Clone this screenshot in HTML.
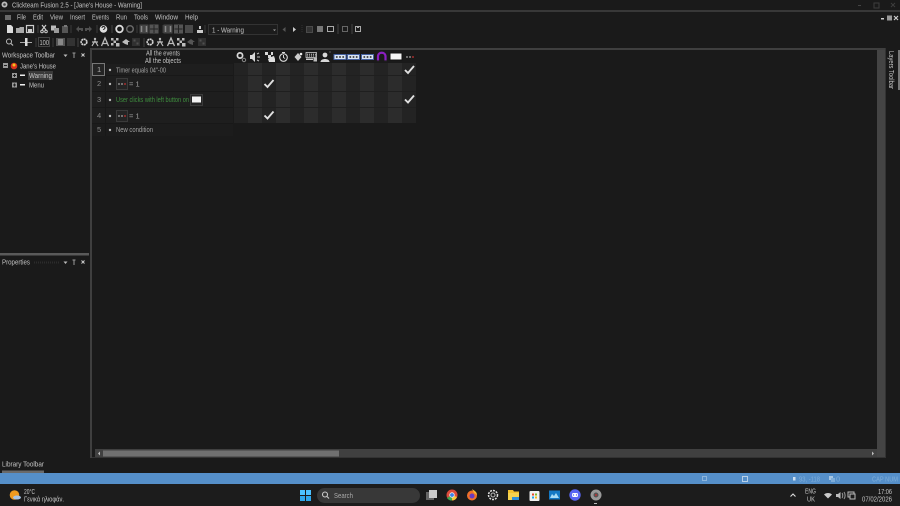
<!DOCTYPE html>
<html><head><meta charset="utf-8"><style>
html,body{margin:0;padding:0;background:#1a1a1a;width:900px;height:506px;overflow:hidden}
svg{display:block}
text{font-family:"Liberation Sans","Noto Sans CJK SC",sans-serif;font-size:7.5px;fill:#c4c4c4}
</style></head><body>
<svg width="900" height="506" viewBox="0 0 900 506" xmlns="http://www.w3.org/2000/svg">
<defs>
<g id="chk"><path d="M-4.500 0.500L-1.500 3.500L4.500 -3.500" fill="none" stroke="#e0e0e0" stroke-width="1.900"/></g>
<g id="gear"><circle r="2.800" fill="none" stroke="#d0d0d0" stroke-width="1.700" stroke-dasharray="2 .5"/></g>
<g id="run"><circle cx="0" cy="-3" r="1.200" fill="#bbb"/><path d="M-3 4L0 -1L3 4M-3 0H3" stroke="#bbb" stroke-width="1.200" fill="none"/></g>
<g id="atxt"><path d="M-3.500 4L0 -4L3.500 4M-2 1.500H2" stroke="#bbb" stroke-width="1.300" fill="none"/></g>
<g id="chkr"><path d="M-4 -4h2.500v2.500h-2.500zM1 -4h2.500v2.500h-2.500zM-1.500 -1.500h2.500v2.500h-2.500zM1 1h3.500v3.500h-3.500zM-4 1h2.500v2.500h-2.500z" fill="#bbb"/></g>
<g id="obj"><rect x="-4" y="-4" width="8" height="8" fill="#303030"/><path d="M-2.500 -2.500h2v2h-2zM.5 .5h2v2h-2z" fill="#505050"/></g>
<g id="cnt"><rect x="-6" y="-2.500" width="12" height="5" fill="#d8e4f4" stroke="#44609f" stroke-width="1"/><circle cx="-3.200" cy="0" r="1" fill="#444"/><circle cx="0" cy="0" r="1" fill="#444"/><circle cx="3.200" cy="0" r="1" fill="#444"/></g>
<g id="dots"><circle cx="-3" r=".9" fill="#aaa"/><circle cx="0" r=".9" fill="#aaa"/><circle cx="3" r=".9" fill="#c33"/></g>
<g id="tile"><rect x="-4.500" y="-4.500" width="9" height="9" fill="#444"/><path d="M-2.500 -3v6M2.500 -3v6" stroke="#888" stroke-width="1.500"/></g>
<g id="tile2"><rect x="-4.500" y="-4.500" width="9" height="9" fill="#555"/><path d="M0 -4v8M-4 0h8" stroke="#222" stroke-width="1"/></g>
</defs>

<rect width="900" height="506" fill="#1a1a1a"/>

<!-- title bar -->
<circle cx="4.500" cy="4.500" r="3" fill="#bbb"/><circle cx="4.500" cy="4.500" r="1.300" fill="#444"/>
<text x="12" y="7.500" textLength="130" lengthAdjust="spacingAndGlyphs">Clickteam Fusion 2.5 - [Jane's House - Warning]</text>
<rect x="0" y="10" width="900" height="2" fill="#383838"/>
<path d="M858 5.500h3" stroke="#444"/><rect x="874" y="3" width="5" height="5" fill="none" stroke="#3d3d3d"/><path d="M891 3l4 4M895 3l-4 4" stroke="#3d3d3d"/>

<!-- menu -->
<path d="M6 15v5M8 15v5M10 15v5" stroke="#bbb"/>
<text x="17" y="19.500" textLength="9" lengthAdjust="spacingAndGlyphs">File</text>
<text x="33" y="19.500" textLength="10" lengthAdjust="spacingAndGlyphs">Edit</text>
<text x="50" y="19.500" textLength="13" lengthAdjust="spacingAndGlyphs">View</text>
<text x="70" y="19.500" textLength="15" lengthAdjust="spacingAndGlyphs">Insert</text>
<text x="92" y="19.500" textLength="17" lengthAdjust="spacingAndGlyphs">Events</text>
<text x="116" y="19.500" textLength="11" lengthAdjust="spacingAndGlyphs">Run</text>
<text x="134" y="19.500" textLength="14" lengthAdjust="spacingAndGlyphs">Tools</text>
<text x="155" y="19.500" textLength="23" lengthAdjust="spacingAndGlyphs">Window</text>
<text x="185" y="19.500" textLength="13" lengthAdjust="spacingAndGlyphs">Help</text>
<g fill="#ccc"><rect x="881" y="18" width="3" height="1.500"/><rect x="887" y="15.500" width="5" height="5" fill="#999"/></g>
<path d="M894 16l4 4M898 16l-4 4" stroke="#ccc" stroke-width="1.200"/>

<!-- toolbar row 1 -->
<path d="M7 25h4l2 2v6h-6z" fill="#ddd"/>
<path d="M16 28h3l1 -1h4v6h-8z" fill="#aaa"/>
<rect x="26.500" y="25.500" width="7" height="7" fill="#222" stroke="#ccc" stroke-width="1.200"/><rect x="28" y="29" width="4" height="3.500" fill="#ccc"/>
<path d="M38 25v8M112 25v8" stroke="#444"/>
<path d="M42 25l4 5M46 25l-4 5" stroke="#ccc" stroke-width="1.200"/><circle cx="42" cy="31.500" r="1.300" fill="none" stroke="#ccc"/><circle cx="46" cy="31.500" r="1.300" fill="none" stroke="#ccc"/>
<rect x="51" y="25.500" width="5" height="5" fill="#bbb"/><rect x="54" y="28" width="5" height="5" fill="#999"/>
<rect x="62" y="26" width="6" height="7" fill="#555"/><rect x="64" y="25" width="3" height="2" fill="#777"/>
<path d="M71 25v8M97 25v8" stroke="#3a3a3a"/>
<path d="M76 29l3 -3v2h4v3h-2v-1h-2v2z" fill="#505050"/><path d="M92 29l-3 -3v2h-4v3h2v-1h2v2z" fill="#505050"/>
<circle cx="103.500" cy="29" r="3.800" fill="#ddd"/><path d="M102 28c0 -2 3 -2 3 0c0 1 -1.500 1 -1.500 2" stroke="#222" fill="none"/>
<circle cx="119.500" cy="29" r="3.300" fill="none" stroke="#ddd" stroke-width="1.800"/>
<circle cx="130" cy="29" r="3.300" fill="none" stroke="#666" stroke-width="1.500"/>
<path d="M137 25v8M163 25v8M205 25v8" stroke="#3a3a3a"/>
<use href="#tile" x="144" y="29"/><use href="#tile2" x="154" y="29"/>
<use href="#tile" x="168" y="29"/><use href="#tile2" x="178.500" y="29"/><rect x="185" y="25" width="8" height="8" fill="#4a4a4a"/>
<path d="M197 30h6v3h-6z" fill="#ccc"/><path d="M199 26h2v3h-2z" fill="#ccc"/>
<rect x="208.500" y="24.500" width="69" height="10" fill="#1c1c1c" stroke="#333"/>
<text x="212" y="32.500" textLength="32" lengthAdjust="spacingAndGlyphs">1 - Warning</text>
<path d="M273 29.500h3l-1.500 1.500z" fill="#aaa"/>
<path d="M285.500 27v5l-3 -2.500z" fill="#555"/><path d="M293 27v5l3 -2.500z" fill="#ccc"/>
<path d="M302 25v8" stroke="#333" stroke-dasharray="1 1"/>
<rect x="306.500" y="26.500" width="6" height="6" fill="#333" stroke="#4a4a4a"/>
<rect x="317" y="26" width="6" height="6" fill="#777"/>
<rect x="327.500" y="26.500" width="6" height="5" fill="none" stroke="#aaa"/>
<path d="M338 24v10M352 24v10" stroke="#444"/>
<rect x="342.500" y="26.500" width="5" height="5" fill="none" stroke="#666"/>
<rect x="355.500" y="26.500" width="5" height="5" fill="none" stroke="#aaa"/><rect x="357" y="26" width="2" height="2" fill="#aaa"/>

<!-- toolbar row 2 -->
<circle cx="9" cy="41.500" r="2.500" fill="none" stroke="#bbb"/><path d="M11 43.500l2 2" stroke="#bbb" stroke-width="1.200"/>
<rect x="20" y="42" width="12" height="1" fill="#aaa"/><rect x="25" y="38" width="2.500" height="8" fill="#ddd"/>
<path d="M36 38v9" stroke="#3a3a3a"/>
<rect x="38.500" y="37.500" width="11" height="9" fill="none" stroke="#444"/>
<text x="39.500" y="45" textLength="9.500" lengthAdjust="spacingAndGlyphs">100</text>
<path d="M53 38v9" stroke="#3a3a3a"/>
<rect x="56" y="38" width="9" height="8" fill="#555"/><path d="M58 40h5M58 42h5M58 44h5" stroke="#bbb"/>
<rect x="67" y="38" width="8" height="8" fill="#333"/>
<path d="M78 38v9M144 38v9" stroke="#444"/>
<use href="#gear" x="84" y="42"/><use href="#run" x="95" y="42"/><use href="#atxt" x="105" y="42"/><use href="#chkr" x="115" y="42"/>
<path d="M122 42l4 -3l4 3l-2 0v3l-3 -1z" fill="#bbb"/><use href="#obj" x="136" y="42"/>
<use href="#gear" x="150" y="42"/><use href="#run" x="160" y="42"/><use href="#atxt" x="171" y="42"/><use href="#chkr" x="181" y="42"/>
<path d="M187 42l4 -3l4 3l-2 0v3l-3 -1z" fill="#555"/><use href="#obj" x="202" y="42"/>

<!-- main separators -->
<rect x="90" y="48" width="795" height="2" fill="#3f3f3f"/>
<rect x="90" y="48" width="2" height="410" fill="#3f3f3f"/>

<!-- workspace panel -->
<text x="2" y="57.500" textLength="53" lengthAdjust="spacingAndGlyphs">Workspace Toolbar</text>
<path d="M63.500 54.500h4l-2 2.500z" fill="#bbb"/><path d="M74 53v4M72.500 53h3M74 57v1" stroke="#999"/><path d="M81.500 53.500l3 3M84.500 53.500l-3 3" stroke="#ccc"/>
<rect x="3" y="63" width="5" height="5" fill="#999"/><path d="M4 65.500h3" stroke="#222"/>
<circle cx="14" cy="66" r="3.300" fill="#d8321e"/><circle cx="14" cy="65" r="1.500" fill="#f2c31c"/>
<text x="20" y="68.500" textLength="36" lengthAdjust="spacingAndGlyphs">Jane's House</text>
<rect x="12" y="73" width="5" height="5" fill="#999"/><path d="M13 75.500h3M14.500 74v3" stroke="#222"/>
<rect x="20" y="74.500" width="5" height="1.500" fill="#eee"/>
<rect x="28" y="71" width="25" height="9" fill="#3a3a3a"/>
<text x="29" y="78.200" textLength="23" lengthAdjust="spacingAndGlyphs">Warning</text>
<rect x="12" y="82.500" width="5" height="5" fill="#999"/><path d="M13 85h3M14.500 83.500v3" stroke="#222"/>
<rect x="20" y="84" width="5" height="1.500" fill="#eee"/>
<text x="29" y="87.500" textLength="15" lengthAdjust="spacingAndGlyphs">Menu</text>

<!-- properties -->
<rect x="0" y="253" width="89" height="2.500" fill="#5a5a5a"/>
<text x="2" y="264.500" textLength="28" lengthAdjust="spacingAndGlyphs">Properties</text>
<path d="M34 262.500h25" stroke="#2c2c2c" stroke-width="2" stroke-dasharray="1 1"/>
<path d="M63.500 261.500h4l-2 2.500z" fill="#bbb"/><path d="M74 260v4M72.500 260h3M74 264v1" stroke="#999"/><path d="M81.500 260.500l3 3M84.500 260.500l-3 3" stroke="#ccc"/>

<!-- events condition area -->
<text x="146" y="55.500" textLength="34" lengthAdjust="spacingAndGlyphs">All the events</text>
<text x="145" y="63" textLength="36" lengthAdjust="spacingAndGlyphs">All the objects</text>
<rect x="92" y="64" width="141" height="59" fill="#1e1e1e"/>
<rect x="92" y="123" width="141" height="13" fill="#1c1c1c"/>
<g stroke="#181818"><path d="M92 75.500h141M92 91.500h141M92 107.500h141M92 123.500h141M105.500 64v72"/></g>
<rect x="92.500" y="63.500" width="12" height="12" fill="#242424" stroke="#777"/>
<text x="97" y="72" style="fill:#aaa">1</text>
<text x="97" y="86" style="fill:#888">2</text>
<text x="97" y="102" style="fill:#888">3</text>
<text x="97" y="118" style="fill:#888">4</text>
<text x="97" y="132" style="fill:#888">5</text>
<g fill="#bbb"><circle cx="110" cy="70" r="1.200"/><circle cx="110" cy="84" r="1.200"/><circle cx="110" cy="100" r="1.200"/><circle cx="110" cy="116" r="1.200"/><circle cx="110" cy="130" r="1.200"/></g>
<text x="116" y="72.500" textLength="50" lengthAdjust="spacingAndGlyphs" style="fill:#a0a0a0">Timer equals 04"-00</text>
<rect x="116.500" y="78.500" width="11" height="11" fill="#242424" stroke="#3a3a3a"/><use href="#dots" x="122" y="84"/>
<text x="129" y="86.500" style="fill:#a0a0a0">= 1</text>
<text x="116" y="102" textLength="73" lengthAdjust="spacingAndGlyphs" style="fill:#3f8f3f">User clicks with left button on</text>
<rect x="190.500" y="94.500" width="12" height="11" fill="#242424" stroke="#3a3a3a"/><rect x="192" y="96.500" width="9" height="6" fill="#f2f2f2"/>
<rect x="116.500" y="110.500" width="11" height="11" fill="#242424" stroke="#3a3a3a"/><use href="#dots" x="122" y="116"/>
<text x="129" y="118.500" style="fill:#a0a0a0">= 1</text>
<text x="116" y="132" textLength="37" lengthAdjust="spacingAndGlyphs" style="fill:#a0a0a0">New condition</text>

<!-- grid -->
<g fill="#232323"><rect x="234" y="63" width="14" height="60"/><rect x="262" y="63" width="14" height="60"/><rect x="290" y="63" width="14" height="60"/><rect x="318" y="63" width="14" height="60"/><rect x="346" y="63" width="14" height="60"/><rect x="374" y="63" width="14" height="60"/><rect x="402" y="63" width="14" height="60"/></g>
<g fill="#2c2c2c"><rect x="248" y="63" width="14" height="60"/><rect x="276" y="63" width="14" height="60"/><rect x="304" y="63" width="14" height="60"/><rect x="332" y="63" width="14" height="60"/><rect x="360" y="63" width="14" height="60"/><rect x="388" y="63" width="14" height="60"/></g>
<g stroke="#1f1f1f"><path d="M234 75.500h182M234 91.500h182M234 107.500h182"/></g>
<use href="#chk" x="409.500" y="69.500"/><use href="#chk" x="269" y="83.500"/><use href="#chk" x="409.500" y="99"/><use href="#chk" x="269" y="115"/>

<!-- object header icons -->
<circle cx="240" cy="55.500" r="2.600" fill="none" stroke="#d8d8d8" stroke-width="1.700"/><circle cx="244" cy="60" r="1.700" fill="none" stroke="#888"/>
<path d="M250 55h2l3 -3v10l-3 -3h-2z" fill="#d8d8d8"/><path d="M257 54l2 -1M257 57h3M257 60l2 1" stroke="#bbb"/>
<path d="M265 52h3v3h-3zM271 52h2v3h-2zM268 55h3v3h-3z" fill="#d8d8d8"/><path d="M271 57l3 -1l1 3v3h-6l-1 -3z" fill="#e0e0e0"/>
<circle cx="283.500" cy="57.500" r="3.800" fill="none" stroke="#d8d8d8" stroke-width="1.100"/><path d="M283.500 55v2.500l1.500 1M282 52.500h3" stroke="#d8d8d8"/>
<path d="M298 53l3.500 4l-3.500 4l-3.500 -4z" fill="#ccc"/><circle cx="301" cy="54" r="1.300" fill="#eee"/>
<rect x="306" y="52.500" width="10.500" height="5" fill="#222" stroke="#ccc" stroke-width=".8"/><path d="M307 54.200h9M307 56h9" stroke="#ccc" stroke-dasharray="1 1"/><rect x="306" y="58.500" width="7" height="1.500" fill="#ccc"/><rect x="313.500" y="58" width="3.500" height="3.500" fill="#bbb"/>
<circle cx="325" cy="55" r="2.400" fill="#d8d8d8"/><path d="M320.500 62c0 -4 9 -4 9 0z" fill="#d8d8d8"/><circle cx="330" cy="52" r=".6" fill="#888"/>
<use href="#cnt" x="340" y="57"/><use href="#cnt" x="353.500" y="57"/><use href="#cnt" x="367.500" y="57"/>
<path d="M378 60.500v-4c0 -5 7.500 -5 7.500 0v4" fill="none" stroke="#8a1fc0" stroke-width="2.200"/><path d="M376.800 61h2.400M384.400 61h2.400" stroke="#222" stroke-width="1.200"/>
<rect x="390" y="53" width="12" height="7" fill="#f4f4f4" stroke="#111"/>
<use href="#dots" x="410" y="57"/>

<!-- vertical scrollbar & layers -->
<rect x="877" y="50" width="8" height="407" fill="#444"/>
<rect x="885" y="48" width="1" height="410" fill="#333"/>
<text transform="translate(889,51) rotate(90)" textLength="38" lengthAdjust="spacingAndGlyphs">Layers Toolbar</text>
<rect x="898" y="50" width="2" height="40" fill="#777"/>

<!-- horizontal scrollbar -->
<rect x="92" y="457" width="793" height="1" fill="#333"/>
<rect x="95" y="449" width="782" height="8" fill="#404040"/>
<path d="M100 451.500v4l-2 -2z" fill="#bbb"/>
<rect x="103" y="450.500" width="236" height="6" fill="#707070"/>
<path d="M872 451.500v4l2 -2z" fill="#bbb"/>

<!-- library toolbar -->
<text x="2" y="466.500" textLength="42" lengthAdjust="spacingAndGlyphs">Library Toolbar</text>
<rect x="2" y="470.500" width="42" height="2.500" fill="#6a6a6a"/>

<!-- status bar -->
<rect x="0" y="473" width="900" height="11" fill="#558fc9"/>
<g fill="none" stroke="#8db5dc"><rect x="702.500" y="476.500" width="4" height="4"/><rect x="742.500" y="476.500" width="5" height="5" stroke="#b8d0e8"/></g>
<rect x="793" y="477" width="2.500" height="3.500" fill="#cfe0f0"/>
<text x="799" y="481.500" textLength="21" lengthAdjust="spacingAndGlyphs" style="fill:#7fadd8">93, -118</text>
<rect x="829" y="476" width="4" height="4" fill="#a5c5e3"/><rect x="831" y="478" width="4" height="4" fill="#7fadd8"/>
<text x="836" y="481.500" style="fill:#7fadd8">0</text>
<text x="872" y="481.500" textLength="26" lengthAdjust="spacingAndGlyphs" style="fill:#7fadd8">CAP  NUM</text>

<!-- taskbar -->
<rect x="0" y="484" width="900" height="22" fill="#1c1c1c"/>
<circle cx="14.500" cy="495" r="4.800" fill="#f09a1e"/><ellipse cx="17" cy="497.500" rx="4" ry="2" fill="#a8c4e4"/>
<text x="24" y="494" textLength="11" lengthAdjust="spacingAndGlyphs">20°C</text>
<text x="24" y="501.500" textLength="40" lengthAdjust="spacingAndGlyphs">Γενικά ηλιοφάν.</text>
<g fill="#4cc2ff"><rect x="300" y="490" width="5" height="5"/><rect x="306" y="490" width="5" height="5"/><rect x="300" y="496" width="5" height="5" fill="#2fa8ec"/><rect x="306" y="496" width="5" height="5" fill="#2fa8ec"/></g>
<rect x="317" y="488" width="103" height="15" rx="7.500" fill="#383838"/>
<circle cx="325" cy="494.500" r="2.500" fill="none" stroke="#ccc" stroke-width="1.100"/><path d="M327 496.500l2 2" stroke="#ccc" stroke-width="1.100"/>
<text x="334" y="498" textLength="19" lengthAdjust="spacingAndGlyphs" style="fill:#aaa">Search</text>
<rect x="426" y="492" width="8" height="8" fill="#666"/><rect x="429" y="490" width="8" height="8" fill="#ccc"/>
<circle cx="452" cy="495" r="5.500" fill="#dd4a3a"/><path d="M452 495L447 498A5.500 5.500 0 0 0 452 500.500z" fill="#3fa84f"/><path d="M452 495L457 497A5.500 5.500 0 0 1 452 500.500z" fill="#f6c83a"/><circle cx="452" cy="495" r="2.300" fill="#3d82e8" stroke="#eee" stroke-width=".8"/>
<circle cx="472" cy="495.500" r="5" fill="#f0702a"/><circle cx="472" cy="496" r="2.500" fill="#6a3ac0"/><path d="M472 489c3 2 5 3 5 6l-3 -2z" fill="#fbb531"/>
<circle cx="493" cy="495" r="4.500" fill="none" stroke="#ddd" stroke-width="1.500" stroke-dasharray="2 1"/><circle cx="493" cy="495" r="2" fill="none" stroke="#bbb"/>
<path d="M508 490h5l1 1.500h5v3h-11z" fill="#f3c12f"/><rect x="508" y="493" width="11" height="7" fill="#f6d24e"/><rect x="512" y="497" width="7" height="3" fill="#2f8fd8"/>
<rect x="529.500" y="491" width="10" height="10" rx="1" fill="#f0f0f0"/><rect x="532" y="493.500" width="2" height="2" fill="#e8492b"/><rect x="535" y="493.500" width="2" height="2" fill="#7fba2a"/><rect x="532" y="496.500" width="2" height="2" fill="#1fa4e8"/><rect x="535" y="496.500" width="2" height="2" fill="#fcb813"/>
<rect x="549" y="490.500" width="11" height="9" fill="#1479c4"/><path d="M550 498l2 -4l2 2l2 -3l3 5z" fill="#a7dcf6"/>
<circle cx="575" cy="495" r="5.700" fill="#5865f2"/><rect x="572" y="493" width="6" height="4" rx="1.500" fill="#fff"/><circle cx="573.500" cy="495" r=".7" fill="#5865f2"/><circle cx="576.500" cy="495" r=".7" fill="#5865f2"/>
<circle cx="596" cy="495" r="5.500" fill="#9a9a9a"/><circle cx="596" cy="495" r="2.500" fill="#555"/><circle cx="596" cy="495" r="1" fill="#b33"/>
<rect x="594" y="503" width="3" height="1" fill="#bbb"/>
<path d="M790.500 496.500l2.500 -2.500l2.500 2.500" fill="none" stroke="#ddd" stroke-width="1.100"/>
<text x="805" y="493.500" textLength="11" lengthAdjust="spacingAndGlyphs">ENG</text>
<text x="807" y="501.500" textLength="8" lengthAdjust="spacingAndGlyphs">UK</text>
<path d="M824 494.500c2 -2 6 -2 8 0l-4 4z" fill="#ccc"/>
<path d="M836 494h2l2.500 -2v7l-2.500 -2h-2z" fill="#bbb"/><path d="M842 493c1 1 1 4 0 5M844 492c1.500 2 1.500 5 0 7" stroke="#999" fill="none"/>
<rect x="848" y="492" width="6" height="5" fill="none" stroke="#bbb"/><rect x="850" y="494" width="5" height="5" fill="#1c1c1c" stroke="#bbb"/>
<text x="878" y="494" textLength="14" lengthAdjust="spacingAndGlyphs">17:06</text>
<text x="862" y="501.500" textLength="30" lengthAdjust="spacingAndGlyphs">07/02/2026</text>
</svg>
</body></html>
